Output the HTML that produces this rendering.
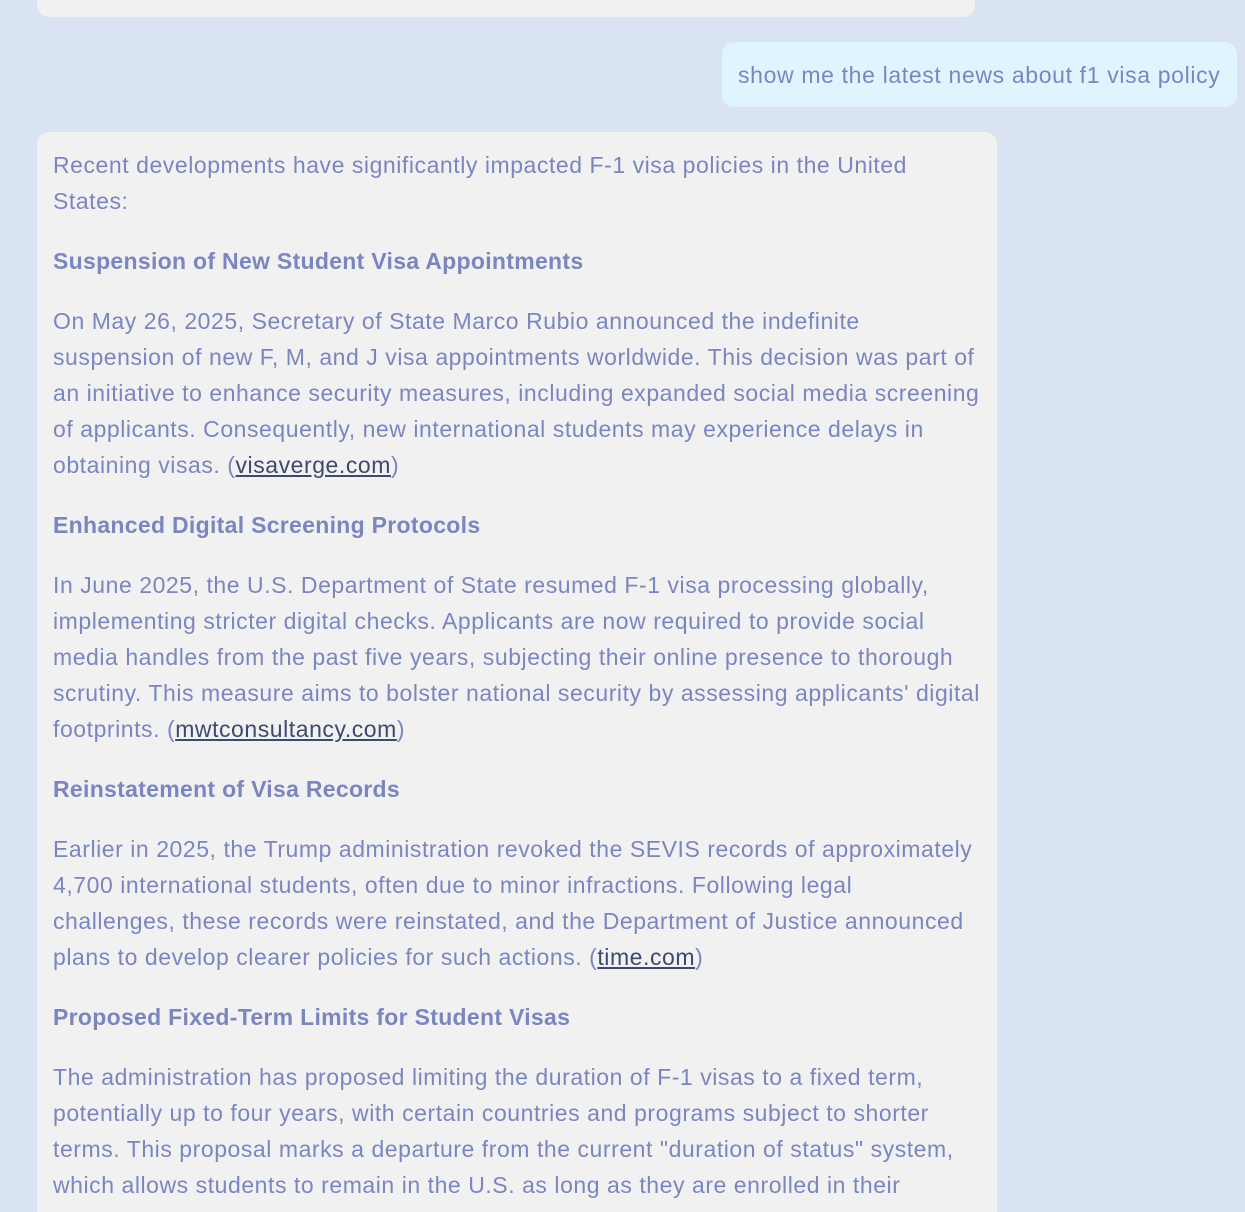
<!DOCTYPE html>
<html><head><meta charset="utf-8"><style>
html,body{margin:0;padding:0;height:1212px;overflow:hidden;}
body{width:1245px;background:#dae3f1;font-family:"Liberation Sans",sans-serif;color:#7b86be;font-size:23px;letter-spacing:0.55px;position:relative;}
.top{position:absolute;left:37px;top:-20px;width:938px;height:37px;background:#f1f1f1;border-radius:12px;}
.user{position:absolute;left:722px;top:42px;width:515px;height:65px;background:#e0f4fe;border-radius:12px;box-sizing:border-box;padding-left:16px;line-height:66px;white-space:nowrap;letter-spacing:0.65px;}
.bot{position:absolute;left:37px;top:132px;width:960px;height:1080px;background:#f1f1f1;border-radius:12px 12px 0 0;}
.c{position:absolute;left:16px;top:15px;}
.l{display:block;height:36px;line-height:36px;white-space:nowrap;}
.h{font-weight:bold;letter-spacing:0.3px;}
.g{height:24px;}
a{color:#3d4a6e;text-decoration:underline;}
</style></head><body>
<div class="top"></div>
<div class="user">show me the latest news about f1 visa policy</div>
<div class="bot"><div class="c">
<span class="l">Recent developments have significantly impacted F-1 visa policies in the United</span>
<span class="l">States:</span>
<div class="g"></div>
<span class="l h">Suspension of New Student Visa Appointments</span>
<div class="g"></div>
<span class="l">On May 26, 2025, Secretary of State Marco Rubio announced the indefinite</span>
<span class="l">suspension of new F, M, and J visa appointments worldwide. This decision was part of</span>
<span class="l">an initiative to enhance security measures, including expanded social media screening</span>
<span class="l">of applicants. Consequently, new international students may experience delays in</span>
<span class="l">obtaining visas. (<a>visaverge.com</a>)</span>
<div class="g"></div>
<span class="l h">Enhanced Digital Screening Protocols</span>
<div class="g"></div>
<span class="l">In June 2025, the U.S. Department of State resumed F-1 visa processing globally,</span>
<span class="l">implementing stricter digital checks. Applicants are now required to provide social</span>
<span class="l">media handles from the past five years, subjecting their online presence to thorough</span>
<span class="l">scrutiny. This measure aims to bolster national security by assessing applicants' digital</span>
<span class="l">footprints. (<a>mwtconsultancy.com</a>)</span>
<div class="g"></div>
<span class="l h">Reinstatement of Visa Records</span>
<div class="g"></div>
<span class="l">Earlier in 2025, the Trump administration revoked the SEVIS records of approximately</span>
<span class="l">4,700 international students, often due to minor infractions. Following legal</span>
<span class="l">challenges, these records were reinstated, and the Department of Justice announced</span>
<span class="l">plans to develop clearer policies for such actions. (<a>time.com</a>)</span>
<div class="g"></div>
<span class="l h">Proposed Fixed-Term Limits for Student Visas</span>
<div class="g"></div>
<span class="l">The administration has proposed limiting the duration of F-1 visas to a fixed term,</span>
<span class="l">potentially up to four years, with certain countries and programs subject to shorter</span>
<span class="l">terms. This proposal marks a departure from the current "duration of status" system,</span>
<span class="l">which allows students to remain in the U.S. as long as they are enrolled in their</span>
</div></div>
</body></html>
